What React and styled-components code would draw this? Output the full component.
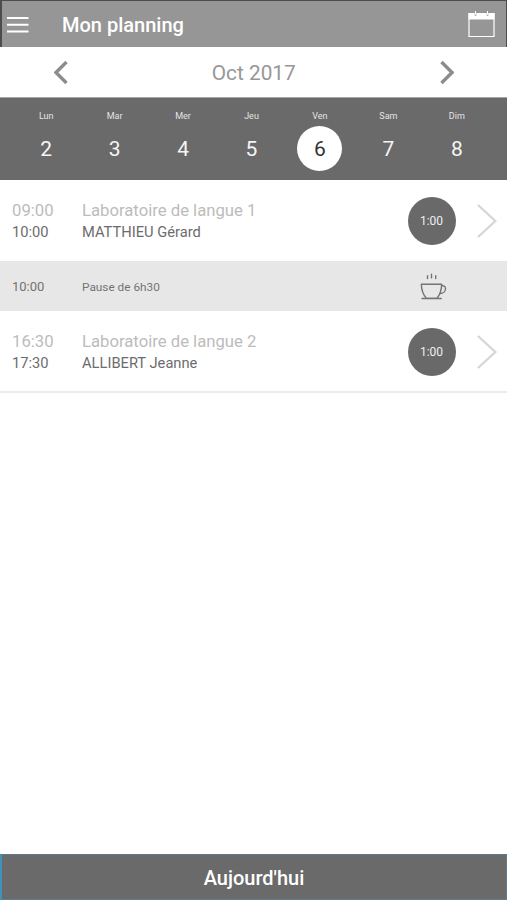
import React, { useState } from "react";
import styled, { createGlobalStyle } from "styled-components";

const days = [
  { label: "Lun", date: 2 },
  { label: "Mar", date: 3 },
  { label: "Mer", date: 4 },
  { label: "Jeu", date: 5 },
  { label: "Ven", date: 6 },
  { label: "Sam", date: 7 },
  { label: "Dim", date: 8 },
];

const lessons = [
  {
    start: "09:00",
    end: "10:00",
    title: "Laboratoire de langue 1",
    teacher: "MATTHIEU Gérard",
    duration: "1:00",
  },
  { pause: true, start: "10:00", title: "Pause de 6h30" },
  {
    start: "16:30",
    end: "17:30",
    title: "Laboratoire de langue 2",
    teacher: "ALLIBERT Jeanne",
    duration: "1:00",
  },
];

const MenuIcon = () => (
  <svg width="22" height="16" viewBox="0 0 22 16" stroke="#fff" strokeWidth="2">
    <path d="M0 1h21.500M0 7.800h21.500M0 14.500h21.500" />
  </svg>
);

const CalendarIcon = () => (
  <svg width="27" height="27" viewBox="0 0 27 27" fill="none">
    <path d="M0.500 2h26v6.500h-26z" fill="#fff" />
    <path d="M1 2.500h25v23H1z" stroke="#fff" strokeWidth="1.2" />
    <path d="M7.500 2v3M19.500 2v3" stroke="#aaa" strokeWidth="1.6" />
    <path d="M7.500 0v3.800M19.500 0v3.800" stroke="#fff" strokeWidth="1" />
  </svg>
);

const Chevron = ({ right }) => (
  <svg width="14" height="24" viewBox="0 0 14 24" fill="none">
    <path
      d={right ? "M1.500 1L12 11.500L1.500 22" : "M12.500 1L2 11.500L12.500 22"}
      stroke="#8c8c8c"
      strokeWidth="3.4"
    />
  </svg>
);

const RowArrow = () => (
  <svg width="20" height="34" viewBox="0 0 20 34" fill="none">
    <path d="M1 1L18.300 17L1 33" stroke="#d6d6d6" strokeWidth="2.300" />
  </svg>
);

const CupIcon = () => (
  <svg
    width="27"
    height="27"
    viewBox="0 0 27 27"
    fill="none"
    stroke="#737373"
    strokeWidth="1.400"
    strokeLinecap="round"
    strokeLinejoin="round"
  >
    <path d="M1.300 11.200h20.400c-.2 5.800-1.400 10.300-4.900 14.200H6.500C2.900 21.500 1.500 17 1.300 11.200z" />
    <path d="M21.600 12.800c2.400-.5 4.100.8 3.900 3.200-.2 2.700-2.500 4.600-5.500 4.500" />
    <path d="M2 25.500h19.200" />
    <path d="M7.500 2.800v2.800M11.500 1.300v3.600M15.700 2.800v2.800" />
  </svg>
);

const App = () => {
  const [selected, setSelected] = useState(6);

  return (
    <Wrapper>
      <GlobalStyle />
      <Header>
        <IconButton aria-label="menu">
          <MenuIcon />
        </IconButton>
        <Title>Mon planning</Title>
        <IconButton aria-label="calendrier">
          <CalendarIcon />
        </IconButton>
      </Header>

      <MonthBar>
        <IconButton aria-label="précédent">
          <Chevron />
        </IconButton>
        <Month>Oct 2017</Month>
        <IconButton aria-label="suivant">
          <Chevron right />
        </IconButton>
      </MonthBar>

      <Week>
        {days.map(({ label, date }) => (
          <Day key={date} onClick={() => setSelected(date)}>
            <DayLabel>{label}</DayLabel>
            <DayNumber $active={date === selected}>{date}</DayNumber>
          </Day>
        ))}
      </Week>

      <List>
        {lessons.map((item) =>
          item.pause ? (
            <PauseRow key={item.start + item.title}>
              <PauseTime>{item.start}</PauseTime>
              <PauseText>{item.title}</PauseText>
              <CupIcon />
            </PauseRow>
          ) : (
            <LessonRow key={item.start + item.title}>
              <Column>
                <Light>{item.start}</Light>
                <Dark>{item.end}</Dark>
              </Column>
              <Column $grow>
                <Light>{item.title}</Light>
                <Dark>{item.teacher}</Dark>
              </Column>
              <Duration>{item.duration}</Duration>
              <RowArrow />
            </LessonRow>
          )
        )}
      </List>

      <TodayButton>Aujourd'hui</TodayButton>
    </Wrapper>
  );
};

export default App;

const GlobalStyle = createGlobalStyle`
  * {
    box-sizing: border-box;
  }

  body {
    margin: 0;
    background: #fff;
    font-family: Roboto, sans-serif;
  }

  svg {
    display: block;
    flex-shrink: 0;
  }
`;

const Wrapper = styled.div`
  display: flex;
  flex-direction: column;
  height: 100vh;
`;

const IconButton = styled.button`
  padding: 0;
  border: none;
  background: transparent;
  cursor: pointer;
`;

const Header = styled.header`
  display: flex;
  align-items: center;
  height: 47px;
  padding: 1px 11px 0 5px;
  background: #969696;
  border: 1px solid #4c4c4c;
  border-left-width: 2px;
  border-bottom: none;
`;

const Title = styled.h1`
  flex: 1;
  margin: 0 0 0 33px;
  font-size: 20px;
  font-weight: 500;
  line-height: 24px;
  color: #fff;
`;

const MonthBar = styled.div`
  display: flex;
  align-items: center;
  justify-content: space-between;
  height: 51px;
  padding: 1px 53px 0 53.5px;
  border-bottom: 1px solid #a5a5a5;
`;

const Month = styled.span`
  padding-top: 1px;
  font-size: 20.8px;
  color: #979797;
`;

const Week = styled.div`
  display: grid;
  grid-template-columns: repeat(7, 1fr);
  height: 82px;
  padding: 11px 16px 0 12px;
  background: #6a6a6b;
`;

const Day = styled.div`
  display: flex;
  flex-direction: column;
  align-items: center;
  gap: 3px;
  cursor: pointer;
`;

const DayLabel = styled.span`
  font-size: 9px;
  line-height: 14px;
  color: #e4e4e4;
`;

const DayNumber = styled.span`
  display: flex;
  align-items: center;
  justify-content: center;
  width: 45px;
  height: 45px;
  border-radius: 50%;
  font-size: 21px;
  color: ${({ $active }) => ($active ? "#333" : "#f5f5f5")};
  background: ${({ $active }) => ($active ? "#fff" : "transparent")};
`;

const List = styled.div`
  flex: 1;
`;

const LessonRow = styled.div`
  display: flex;
  align-items: center;
  height: 81px;
  padding: 0 10.5px 0 12px;

  &:last-child {
    height: 82px;
    padding-top: 2px;
    border-bottom: 2px solid #ececec;
  }
`;

const Column = styled.div`
  display: flex;
  flex-direction: column;
  width: 70px;
  padding-top: 1px;
  ${({ $grow }) => $grow && "flex: 1;"}
`;

const Light = styled.span`
  font-size: 16.7px;
  line-height: 22px;
  color: #bcbcbc;
`;

const Dark = styled.span`
  font-size: 14.7px;
  line-height: 21px;
  color: #6c6c6c;
`;

const Duration = styled.div`
  display: flex;
  align-items: center;
  justify-content: center;
  width: 48px;
  height: 48px;
  margin-right: 21px;
  border-radius: 50%;
  font-size: 12px;
  color: #eee;
  background: #69696a;
`;

const PauseRow = styled.div`
  display: flex;
  align-items: center;
  height: 50px;
  padding: 0 60px 0 12px;
  background: #e7e7e7;
  color: #737373;
`;

const PauseTime = styled.span`
  width: 70px;
  font-size: 13px;
`;

const PauseText = styled.span`
  flex: 1;
  padding-top: 2px;
  font-size: 11.8px;
`;

const TodayButton = styled.button`
  height: 46px;
  padding: 1px 0 0;
  border: 1px solid #5a7d90;
  border-left: 2px solid #3f93b8;
  background: #6a6a6a;
  font-family: inherit;
  font-size: 20px;
  font-weight: 500;
  color: #fff;
  cursor: pointer;
`;
